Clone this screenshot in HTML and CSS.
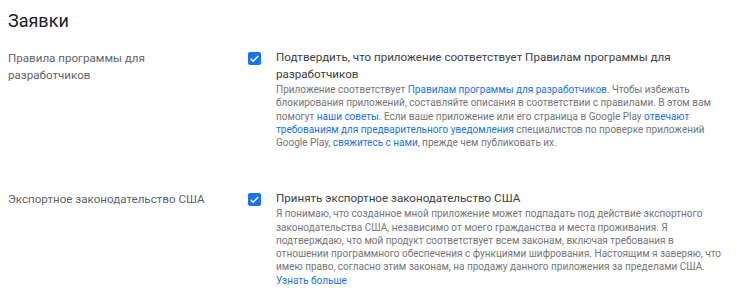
FILE: index.html
```html
<!DOCTYPE html>
<html lang="ru">
<head>
  <meta charset="UTF-8" />
  <meta name="viewport" content="width=device-width, initial-scale=1" />
  <title>Заявки</title>
  <link rel="stylesheet" href="styles.css">
</head>
<body>

<main class="declarations">
  <h1 class="page-title">Заявки</h1>

  <!-- Developer program policies -->
  <section class="decl-row">
    <div class="decl-label">Правила программы для разработчиков</div>
    <div class="decl-body">
      <span class="checkbox checked" aria-hidden="true">
        <svg viewBox="0 0 24 24" width="13" height="13"><path d="M5 12.5l4.5 4.5L19 7.5" fill="none" stroke="#fff" stroke-width="2.6"/></svg>
      </span>
      <div class="decl-text">
        <div class="decl-title">Подтвердить, что приложение соответствует Правилам программы для разработчиков</div>
        <p class="decl-desc">Приложение соответствует <a href="#">Правилам программы для разработчиков</a>. Чтобы избежать блокирования приложений, составляйте описания в соответствии с правилами. В этом вам помогут <a href="#">наши советы</a>. Если ваше приложение или его страница в Google Play <a href="#">отвечают требованиям для предварительного уведомления</a> специалистов по проверке приложений Google Play, <a href="#">свяжитесь с нами</a>, прежде чем публиковать их.</p>
      </div>
    </div>
  </section>

  <!-- US export laws -->
  <section class="decl-row">
    <div class="decl-label">Экспортное законодательство США</div>
    <div class="decl-body">
      <span class="checkbox checked" aria-hidden="true">
        <svg viewBox="0 0 24 24" width="13" height="13"><path d="M5 12.5l4.5 4.5L19 7.5" fill="none" stroke="#fff" stroke-width="2.6"/></svg>
      </span>
      <div class="decl-text">
        <div class="decl-title">Принять экспортное законодательство США</div>
        <p class="decl-desc">Я понимаю, что созданное мной приложение может подпадать под действие экспортного законодательства США, независимо от моего гражданства и места проживания. Я подтверждаю, что мой продукт соответствует всем законам, включая требования в отношении программного обеспечения с функциями шифрования. Настоящим я заверяю, что имею право, согласно этим законам, на продажу данного приложения за пределами США.<br><a href="#">Узнать больше</a></p>
      </div>
    </div>
  </section>
</main>

</body>
</html>
```

FILE: styles.css
```css
/* Reset */
* {
  box-sizing: border-box;
  margin: 0;
  padding: 0;
}

body {
  font-family: Roboto, "Liberation Sans", Arial, sans-serif;
  background: #fff;
  color: #3c4043;
  padding: 9px 8px 0;
}

.page-title {
  font-size: 18px;
  font-weight: 400;
  line-height: 24px;
  color: #202124;
  margin-bottom: 16px;
}

/* Declaration rows */
.decl-row {
  display: grid;
  grid-template-columns: 240px 1fr;
}

.decl-row + .decl-row {
  margin-top: 40px;
}

.decl-label {
  font-size: 11.6px;
  line-height: 17px;
  color: #5f6368;
  padding: 1px 30px 0 0;
}

.decl-body {
  display: flex;
  gap: 15px;
}

.checkbox {
  flex: none;
  width: 13px;
  height: 13px;
  margin-top: 3px;
  border-radius: 2px;
  background: #1a73e8;
  display: flex;
  align-items: center;
  justify-content: center;
}

.decl-text {
  max-width: 452px;
}

.decl-title {
  font-size: 11.6px;
  line-height: 16.6px;
  color: #3c4043;
}

.decl-desc {
  font-size: 10px;
  line-height: 13.3px;
  color: #757575;
  margin-top: 1px;
}

.decl-desc a {
  color: #1a73e8;
  text-decoration: none;
}
```
